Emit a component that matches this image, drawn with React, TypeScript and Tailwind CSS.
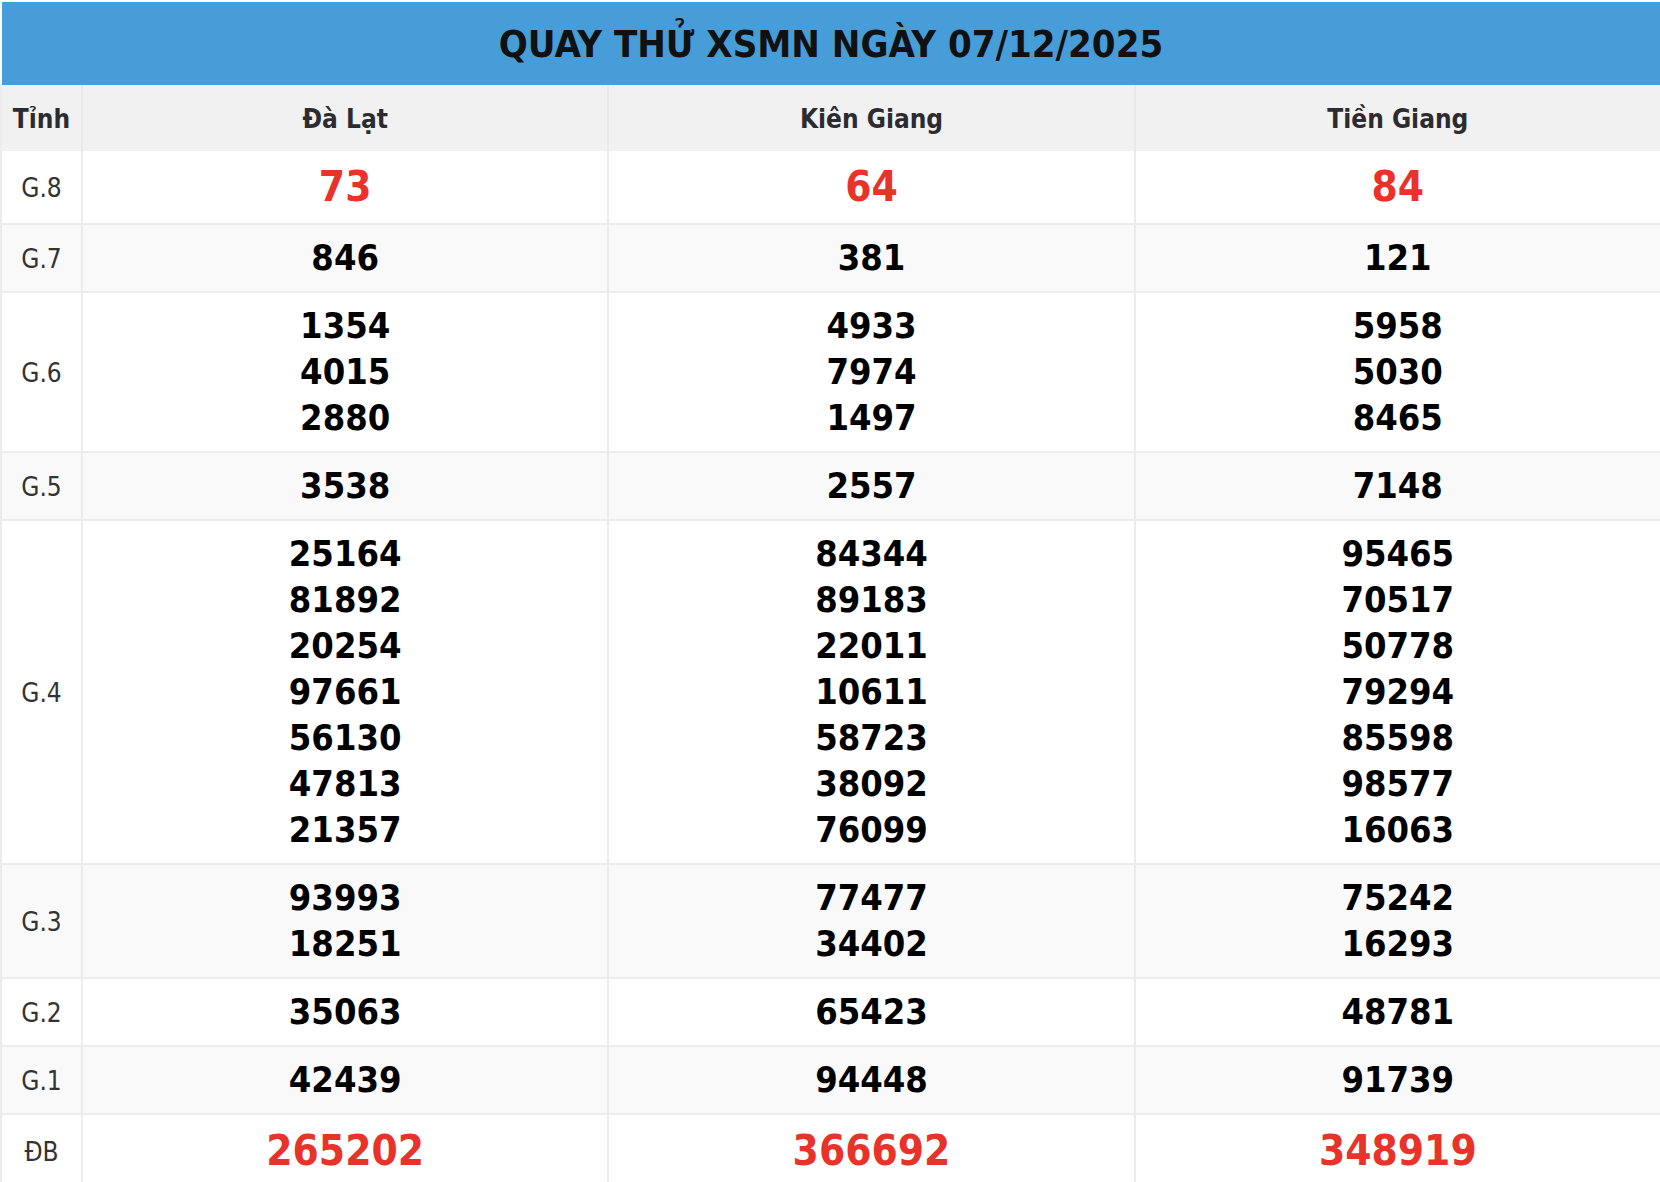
const provinces = ["Đà Lạt", "Kiên Giang", "Tiền Giang"];

type Row = { label: string; values: string[][]; special?: boolean };

const rows: Row[] = [
  { label: "G.8", values: [["73"], ["64"], ["84"]], special: true },
  { label: "G.7", values: [["846"], ["381"], ["121"]] },
  {
    label: "G.6",
    values: [
      ["1354", "4015", "2880"],
      ["4933", "7974", "1497"],
      ["5958", "5030", "8465"],
    ],
  },
  { label: "G.5", values: [["3538"], ["2557"], ["7148"]] },
  {
    label: "G.4",
    values: [
      ["25164", "81892", "20254", "97661", "56130", "47813", "21357"],
      ["84344", "89183", "22011", "10611", "58723", "38092", "76099"],
      ["95465", "70517", "50778", "79294", "85598", "98577", "16063"],
    ],
  },
  {
    label: "G.3",
    values: [
      ["93993", "18251"],
      ["77477", "34402"],
      ["75242", "16293"],
    ],
  },
  { label: "G.2", values: [["35063"], ["65423"], ["48781"]] },
  { label: "G.1", values: [["42439"], ["94448"], ["91739"]] },
  { label: "ĐB", values: [["265202"], ["366692"], ["348919"]], special: true },
];

const font = "font-['DejaVu_Sans_Condensed','DejaVu_Sans',sans-serif]";

export default function App() {
  return (
    <div className={`min-h-screen bg-white pt-[2px] ${font}`}>
      {/* Title */}
      <div className="ml-[2px] flex h-[83px] items-center justify-center bg-[#479dd7]">
        <h1 className="pt-[2px] text-[38px] font-bold text-[#111]">
          QUAY THỬ XSMN NGÀY 07/12/2025
        </h1>
      </div>

      <div className="bg-[#ececec] pl-[2px]">
        {/* Header */}
        <div className="grid grid-cols-[79px_1fr_1fr_1fr] gap-x-[2px] bg-[#e9e9e9]">
          <div className="flex h-[66px] items-center justify-center bg-[#f1f1f1] pt-[2px] text-[26px] font-bold text-[#2b2b30]">
            Tỉnh
          </div>
          {provinces.map((p) => (
            <div
              key={p}
              className="flex h-[66px] items-center justify-center bg-[#f1f1f1] pt-[2px] text-[26px] font-bold text-[#2b2b30]"
            >
              {p}
            </div>
          ))}
        </div>

        {/* Prize rows */}
        <div className="flex flex-col gap-y-[2px]">
          {rows.map((row, i) => {
            const bg = i % 2 === 0 ? "bg-white" : "bg-[#f9f9f9]";
            return (
              <div
                key={row.label}
                className="grid grid-cols-[79px_1fr_1fr_1fr] gap-x-[2px]"
              >
                <div
                  className={`flex items-center justify-center pt-[3px] text-[26px] text-[#333] ${bg}`}
                >
                  {row.label}
                </div>
                {row.values.map((col, j) => (
                  <div
                    key={j}
                    className={`flex flex-col items-center py-[10px] ${bg}`}
                  >
                    {col.map((n) => (
                      <span
                        key={n}
                        className={
                          row.special
                            ? "text-[42px] leading-[52px] font-bold text-[#e8332a]"
                            : "text-[36px] leading-[46px] font-bold text-black"
                        }
                      >
                        {n}
                      </span>
                    ))}
                  </div>
                ))}
              </div>
            );
          })}
        </div>
      </div>
    </div>
  );
}
